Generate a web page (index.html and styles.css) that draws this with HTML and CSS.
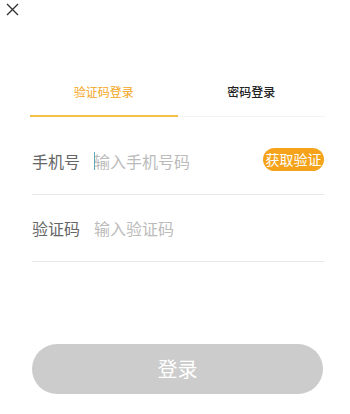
FILE: index.html
```html
<!DOCTYPE html>
<html lang="zh-CN">
<head>
    <meta charset="UTF-8">
    <meta name="viewport" content="width=device-width, initial-scale=1.0">
    <title>登录</title>
    <link rel="stylesheet" href="styles.css">
</head>
<body>

    <div class="page">
        <div class="topbar">
            <svg class="close" width="13" height="13" viewBox="0 0 13 13">
                <path d="M1 1 L12 12 M12 1 L1 12" stroke="#333" stroke-width="1.4" fill="none"/>
            </svg>
        </div>

        <div class="tabs">
            <div class="tab active">验证码登录</div>
            <div class="tab">密码登录</div>
        </div>

        <div class="form">
            <div class="row">
                <span class="label">手机号</span>
                <span class="cursor"></span>
                <span class="placeholder">输入手机号码</span>
                <span class="code-btn">获取验证码</span>
            </div>
            <div class="row">
                <span class="label">验证码</span>
                <span class="placeholder">输入验证码</span>
            </div>
        </div>

        <div class="submit">登录</div>
    </div>

</body>
</html>
```

FILE: styles.css
```css
body {
    margin: 0;
    padding: 0;
    background: #fff;
    font-family: "Noto Sans CJK SC", "Noto Sans", sans-serif;
}
.page {
    width: 350px;
    height: 414px;
    overflow: hidden;
}
.topbar {
    height: 70px;
}
.close {
    display: block;
    margin: 3px 0 0 6px;
}
.tabs {
    display: flex;
    margin: 0 25px 0 30px;
    border-bottom: 1px solid #f3f3f3;
}
.tab {
    flex: 1;
    text-align: center;
    font-size: 12px;
    line-height: 38px;
    height: 42px;
    color: #222;
    font-weight: 500;
}
.tab.active {
    color: #f5a623;
    font-weight: 400;
    border-bottom: 2px solid #f5c04a;
    margin-bottom: -1px;
}
.form {
    margin: 11px 26px 0 32px;
}
.row {
    display: flex;
    align-items: center;
    height: 66px;
    border-bottom: 1px solid #e8e8e8;
}
.label {
    font-size: 16px;
    color: #666;
    width: 62px;
}
.cursor {
    width: 1px;
    height: 18px;
    background: #5aa9b5;
    margin-right: -1px;
}
.placeholder {
    flex: 1;
    font-size: 16px;
    color: #bbb;
}
.code-btn {
    width: 61px;
    height: 23px;
    line-height: 23px;
    border-radius: 12px;
    background: #f5a31a;
    color: #fff;
    font-size: 14px;
    text-align: center;
    word-break: break-all;
    margin-bottom: 4px;
}
.submit {
    margin: 82px 27px 0 32px;
    height: 50px;
    line-height: 50px;
    border-radius: 25px;
    background: #cccccc;
    color: #fff;
    font-size: 20px;
    text-align: center;
}
```
